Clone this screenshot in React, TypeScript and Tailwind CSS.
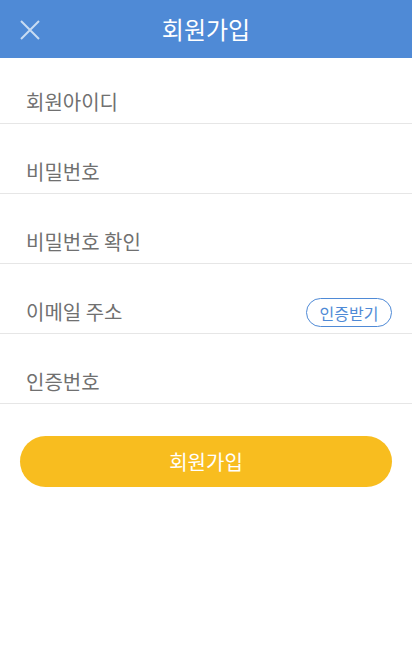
import React from "react"

const fields = [
  { label: "회원아이디", first: true },
  { label: "비밀번호" },
  { label: "비밀번호 확인" },
  { label: "이메일 주소", badge: "인증받기" },
  { label: "인증번호" },
]

export default function App() {
  return (
    <div
      className="min-h-[659px] w-[412px] bg-white"
      style={{ fontFamily: '"Noto Sans CJK KR", "Noto Sans", sans-serif' }}
    >
      {/* header */}
      <header className="relative flex h-[58px] items-center justify-center bg-[#4f8ad6]">
        <button className="absolute left-[19px] top-[19px] flex h-[22px] w-[22px] items-center justify-center">
          <svg width="22" height="22" viewBox="0 0 22 22" fill="none">
            <path d="M2 2L20 20M20 2L2 20" stroke="#c9dcf3" strokeWidth="2" />
          </svg>
        </button>
        <h1 className="text-[24px] font-normal leading-none text-white">회원가입</h1>
      </header>

      {/* form rows */}
      <div>
        {fields.map((f, i) => (
          <div
            key={i}
            className={`flex items-end justify-between border-b border-[#e6e6e6] pb-[6px] pl-[26px] pr-[20px] ${
              f.first ? "h-[66px]" : "h-[70px]"
            }`}
          >
            <span className="text-[20px] leading-[30px] text-[#707070]">{f.label}</span>
            {f.badge && (
              <span className="flex h-[29px] items-center rounded-full border border-[#4f8ad6] px-[12.5px] text-[16px] text-[#4f8ad6]">
                {f.badge}
              </span>
            )}
          </div>
        ))}
      </div>

      <div className="px-[20px] pt-[32px]">
        <button className="flex h-[51px] w-full items-center justify-center rounded-full bg-[#f8bd1f] text-[20px] text-white">
          회원가입
        </button>
      </div>
    </div>
  )
}
